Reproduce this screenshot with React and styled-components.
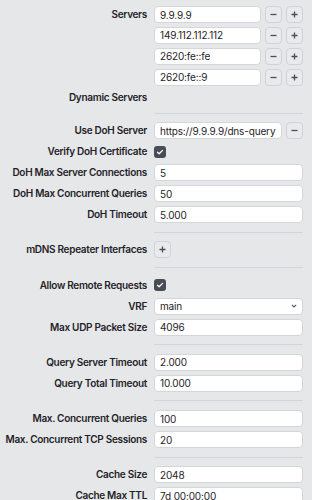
import React from "react";
import styled, { createGlobalStyle } from "styled-components";

const GlobalStyle = createGlobalStyle`
  body {
    margin: 0;
    background: #e6e7e9;
    font-family: Inter, "Noto Sans", sans-serif;
  }
`;

const Form = styled.div`
  display: grid;
  grid-template-columns: 147px 149.3px;
  column-gap: 7px;
  row-gap: 3.9px;
  padding-top: 6px;
`;

const Label = styled.label`
  height: ${(p) => (p.$compact ? "14.5px" : "17px")};
  line-height: ${(p) => (p.$compact ? "14.5px" : "17px")};
  text-align: right;
  white-space: nowrap;
  font-size: 10px;
  font-weight: 600;
  color: #1f2328;
  letter-spacing: -0.3px;
`;

const Field = styled.div`
  display: flex;
  align-items: center;
  gap: 4.2px;
  height: ${(p) => (p.$compact ? "14.5px" : "17px")};
  min-width: 0;
`;

const TextInput = styled.input`
  flex: 1;
  min-width: 0;
  height: 17px;
  box-sizing: border-box;
  border: 1px solid #d4d6d9;
  border-radius: 4px;
  background: #fff;
  padding: 0 5px;
  font-family: inherit;
  font-size: 10px;
  letter-spacing: -0.15px;
  color: #1f2328;
  outline: none;
`;

const SquareButton = styled.button`
  flex: none;
  width: 17px;
  height: 17px;
  padding: 0;
  box-sizing: border-box;
  display: flex;
  align-items: center;
  justify-content: center;
  border: 1px solid #d0d2d6;
  border-radius: 4px;
  background: #e9eaec;
  color: #4a4f57;
`;

const Check = styled.span`
  width: 12px;
  height: 12px;
  border-radius: 3px;
  background: #474c56;
  display: flex;
  align-items: center;
  justify-content: center;
`;

const SelectWrap = styled.div`
  position: relative;
  flex: 1;
  height: 17px;
`;

const Select = styled.select`
  display: block;
  width: 100%;
  height: 17px;
  box-sizing: border-box;
  appearance: none;
  border: 1px solid #d4d6d9;
  border-radius: 4px;
  background: #fff;
  padding: 0 5px;
  font-family: inherit;
  font-size: 10px;
  letter-spacing: -0.15px;
  color: #1f2328;
  outline: none;
`;

const Chevron = styled.svg`
  position: absolute;
  right: 6px;
  top: 50%;
  transform: translateY(-50%);
  pointer-events: none;
`;

const Divider = styled.div`
  grid-column: 2;
  height: 1px;
  background: #d2d4d7;
  margin: 4.8px 0;
`;

function Minus() {
  return (
    <SquareButton>
      <svg width="7" height="7" viewBox="0 0 7 7">
        <path d="M0.5 3.5h6" stroke="currentColor" strokeWidth="1.3" />
      </svg>
    </SquareButton>
  );
}

function Plus() {
  return (
    <SquareButton>
      <svg width="7" height="7" viewBox="0 0 7 7">
        <path d="M0.5 3.5h6M3.5 0.5v6" stroke="currentColor" strokeWidth="1.3" />
      </svg>
    </SquareButton>
  );
}

function Checkbox() {
  return (
    <Check>
      <svg width="8" height="8" viewBox="0 0 8 8">
        <path d="M1.5 4.2l1.7 1.6 3.3-3.4" fill="none" stroke="#fff" strokeWidth="1.3" strokeLinecap="round" strokeLinejoin="round" />
      </svg>
    </Check>
  );
}

function TextRow({ label, value }) {
  return (
    <>
      <Label>{label}</Label>
      <Field>
        <TextInput defaultValue={value} />
      </Field>
    </>
  );
}

const servers = ["9.9.9.9", "149.112.112.112", "2620:fe::fe", "2620:fe::9"];

export default function App() {
  return (
    <>
      <GlobalStyle />
      <Form>
        {servers.map((s, i) => (
          <React.Fragment key={s}>
            <Label>{i === 0 ? "Servers" : ""}</Label>
            <Field>
              <TextInput defaultValue={s} />
              <Minus />
              <Plus />
            </Field>
          </React.Fragment>
        ))}
        <Label $compact>Dynamic Servers</Label>
        <Field $compact />
        <Divider />

        <Label>Use DoH Server</Label>
        <Field>
          <TextInput defaultValue="https://9.9.9.9/dns-query" />
          <Minus />
        </Field>
        <Label>Verify DoH Certificate</Label>
        <Field>
          <Checkbox />
        </Field>
        <TextRow label="DoH Max Server Connections" value="5" />
        <TextRow label="DoH Max Concurrent Queries" value="50" />
        <TextRow label="DoH Timeout" value="5.000" />
        <Divider />

        <Label>mDNS Repeater Interfaces</Label>
        <Field>
          <Plus />
        </Field>
        <Divider />

        <Label>Allow Remote Requests</Label>
        <Field>
          <Checkbox />
        </Field>
        <Label>VRF</Label>
        <Field>
          <SelectWrap>
            <Select defaultValue="main">
              <option value="main">main</option>
            </Select>
            <Chevron width="6" height="4" viewBox="0 0 6 4">
              <path d="M0.8 0.8L3 3L5.2 0.8" fill="none" stroke="#555a62" strokeWidth="1.1" />
            </Chevron>
          </SelectWrap>
        </Field>
        <TextRow label="Max UDP Packet Size" value="4096" />
        <Divider />

        <TextRow label="Query Server Timeout" value="2.000" />
        <TextRow label="Query Total Timeout" value="10.000" />
        <Divider />

        <TextRow label="Max. Concurrent Queries" value="100" />
        <TextRow label="Max. Concurrent TCP Sessions" value="20" />
        <Divider />

        <TextRow label="Cache Size" value="2048" />
        <TextRow label="Cache Max TTL" value="7d 00:00:00" />
      </Form>
    </>
  );
}
